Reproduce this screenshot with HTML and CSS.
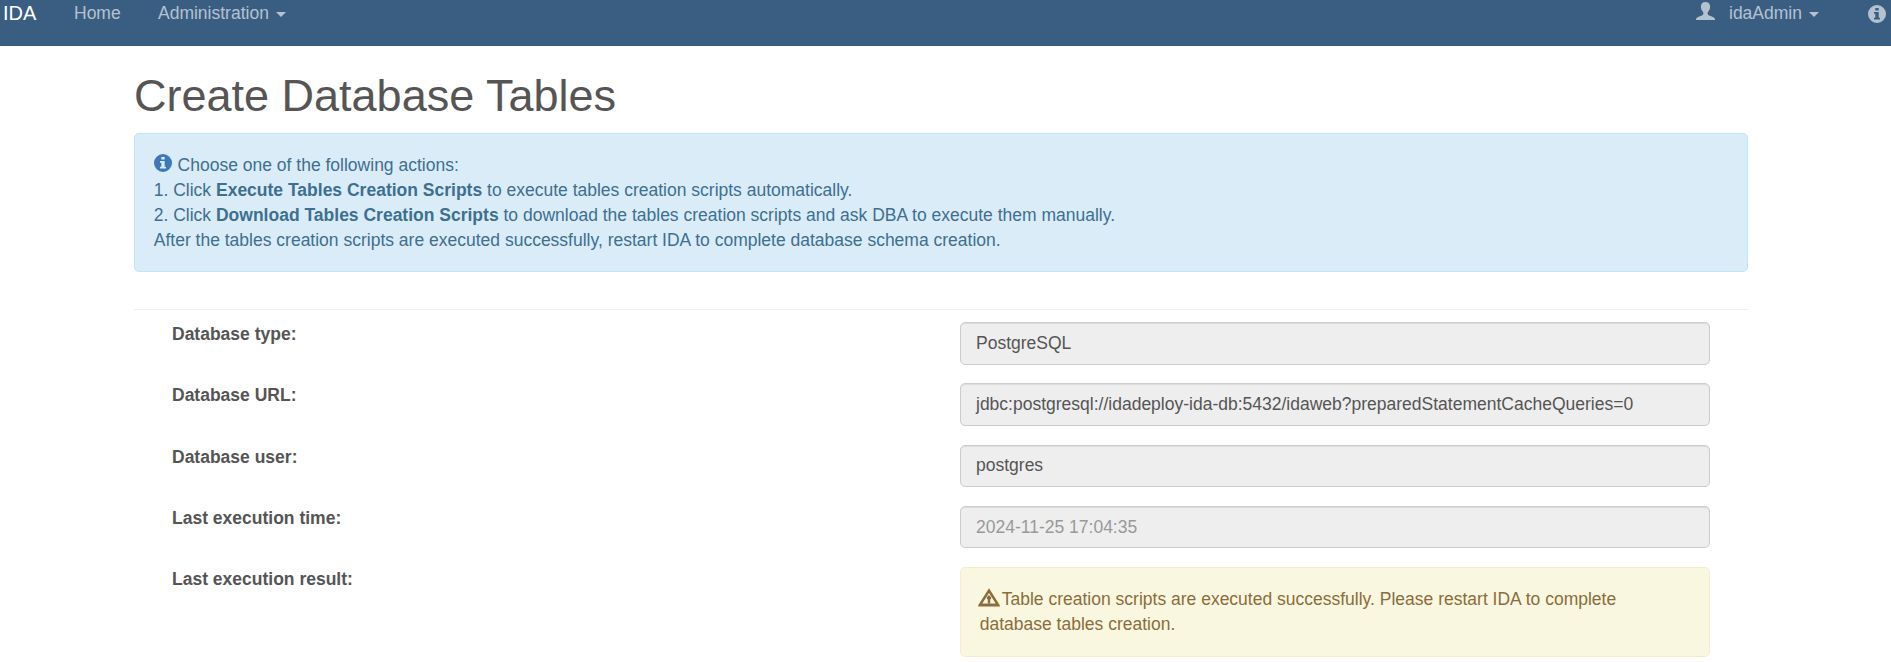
FILE: index.html
```html
<!DOCTYPE html>
<html lang="en">
<head>
<meta charset="utf-8">
<title>IDA - Create Database Tables</title>
<link rel="stylesheet" href="styles.css">
</head>
<body>
<nav class="navbar">
  <a class="brand">IDA</a>
  <a class="nav-home">Home</a>
  <a class="nav-admin">Administration<span class="caret"></span></a>
  <div class="nav-right">
    <svg class="icon-user" viewBox="0 0 19 18"><path d="M9.500 0C6.500 0 4.900 1.900 4.900 4.600c0 2.200.9 4.400 2.400 5.700v1.400c0 .9-.5 1.300-1.500 1.700-2.600 1-5.300 1.700-5.600 3.100L0 18h19l-.2-1.500c-.3-1.400-3-2.100-5.600-3.100-1-.4-1.500-.8-1.500-1.700v-1.400c1.500-1.300 2.400-3.500 2.400-5.700C14.100 1.900 12.500 0 9.500 0z"/></svg>
    <a class="nav-user">idaAdmin<span class="caret"></span></a>
    <svg class="icon-about" viewBox="0 0 18 18"><path fill-rule="evenodd" d="M9 0a9 9 0 1 0 0 18A9 9 0 0 0 9 0zM7.300 3h3.400v2.400H7.300zM6 7h4.700v5.800H12V14.500H6v-1.700h1.300V8.700H6z"/></svg>
  </div>
</nav>
<main class="container">
  <h1 class="title">Create Database Tables</h1>
  <div class="alert alert-info">
    <svg class="icon-info" viewBox="0 0 18 18"><path fill-rule="evenodd" d="M9 0a9 9 0 1 0 0 18A9 9 0 0 0 9 0zM7.300 3h3.400v2.400H7.300zM6 7h4.700v5.800H12V14.500H6v-1.700h1.300V8.700H6z"/></svg>
    Choose one of the following actions:<br>
    1. Click <b>Execute Tables Creation Scripts</b> to execute tables creation scripts automatically.<br>
    2. Click <b>Download Tables Creation Scripts</b> to download the tables creation scripts and ask DBA to execute them manually.<br>
    After the tables creation scripts are executed successfully, restart IDA to complete database schema creation.
  </div>
  <hr class="divider">
  <div class="form">
    <div class="row"><span class="label">Database type:</span><div class="field">PostgreSQL</div></div>
    <div class="row"><span class="label">Database URL:</span><div class="field">jdbc:postgresql://idadeploy-ida-db:5432/idaweb?preparedStatementCacheQueries=0</div></div>
    <div class="row"><span class="label">Database user:</span><div class="field field-user">postgres</div></div>
    <div class="row"><span class="label">Last execution time:</span><div class="field muted">2024-11-25 17:04:35</div></div>
    <div class="row"><span class="label">Last execution result:</span>
      <div class="alert alert-warning"><svg class="icon-warning" viewBox="0 0 22 19"><path fill-rule="evenodd" d="M11 .3L21.800 17.200V18.500H.2V17.200zM11 5L4.300 15.500H17.700z"/><path d="M8.800 9.200L11 7l2.200 2.200v1.600l-1 .6V15.500H9.800v-4.100l-1-.6z"/></svg>Table creation scripts are executed successfully. Please restart IDA to complete database tables creation.</div>
    </div>
  </div>
</main>
</body>
</html>
```
FILE: styles.css
```css
* { box-sizing: border-box; }
body {
  margin: 0;
  height: 662px;
  overflow: hidden;
  background: #fff;
  color: #555;
  font: 17.5px/25px "Liberation Sans", Arial, sans-serif;
}
.navbar {
  display: flex;
  align-items: flex-start;
  height: 46px;
  padding-left: 3px;
  background: #3a5e82;
  border-bottom: 1px solid #345a80;
  color: #b4c2d0;
}
.brand, .nav-home, .nav-admin, .nav-user { padding-top: 1px; }
.brand { width: 71px; color: #fff; font-size: 20px; }
.nav-home { width: 84px; }
.caret {
  display: inline-block;
  margin-left: 7px;
  vertical-align: middle;
  border: 5px solid transparent;
  border-top-color: currentColor;
  border-bottom: 0;
}
.nav-right { display: flex; margin-left: auto; padding-right: 5px; }
.icon-user { width: 19px; height: 18px; margin: 2px 14px 0 0; fill: currentColor; }
.nav-user { width: 139px; }
.icon-about { width: 18px; height: 18px; margin-top: 5px; fill: currentColor; }
.container { width: 1614px; margin-left: 134px; }
.title { margin: 25px 0 12px; font-size: 45px; line-height: 50px; font-weight: 400; }
.alert { padding: 18.75px; border: 1px solid; border-radius: 5px; }
.alert-info { height: 139px; background: #daecf8; border-color: #bce8f1; color: #3d6f91; }
.icon-info { width: 18px; height: 18px; margin-right: 1px; fill: #3c78bb; vertical-align: -1px; }
.divider { margin: 37px 0 0; border: 0; border-top: 1px solid #eee; }
.form { display: flex; flex-direction: column; gap: 18.75px; padding: 12px 38px 0; }
.row { display: flex; justify-content: space-between; align-items: flex-start; }
.label { font-weight: 700; }
.field {
  width: 750px;
  height: 42.5px;
  padding: 8px 15px;
  background: #eee;
  border: 1px solid #ccc;
  border-radius: 5px;
  box-shadow: inset 0 1px 1px rgba(0, 0, 0, .075);
}
.field-user { padding-top: 7px; }
.muted { color: #999; }
.alert-warning { width: 750px; height: 90px; background: #faf7e0; border-color: #f7ebc8; color: #8a6d3b; }
.icon-warning { width: 22px; height: 19px; margin: 0 2px 0 -2px; fill: currentColor; vertical-align: -2px; }
```
